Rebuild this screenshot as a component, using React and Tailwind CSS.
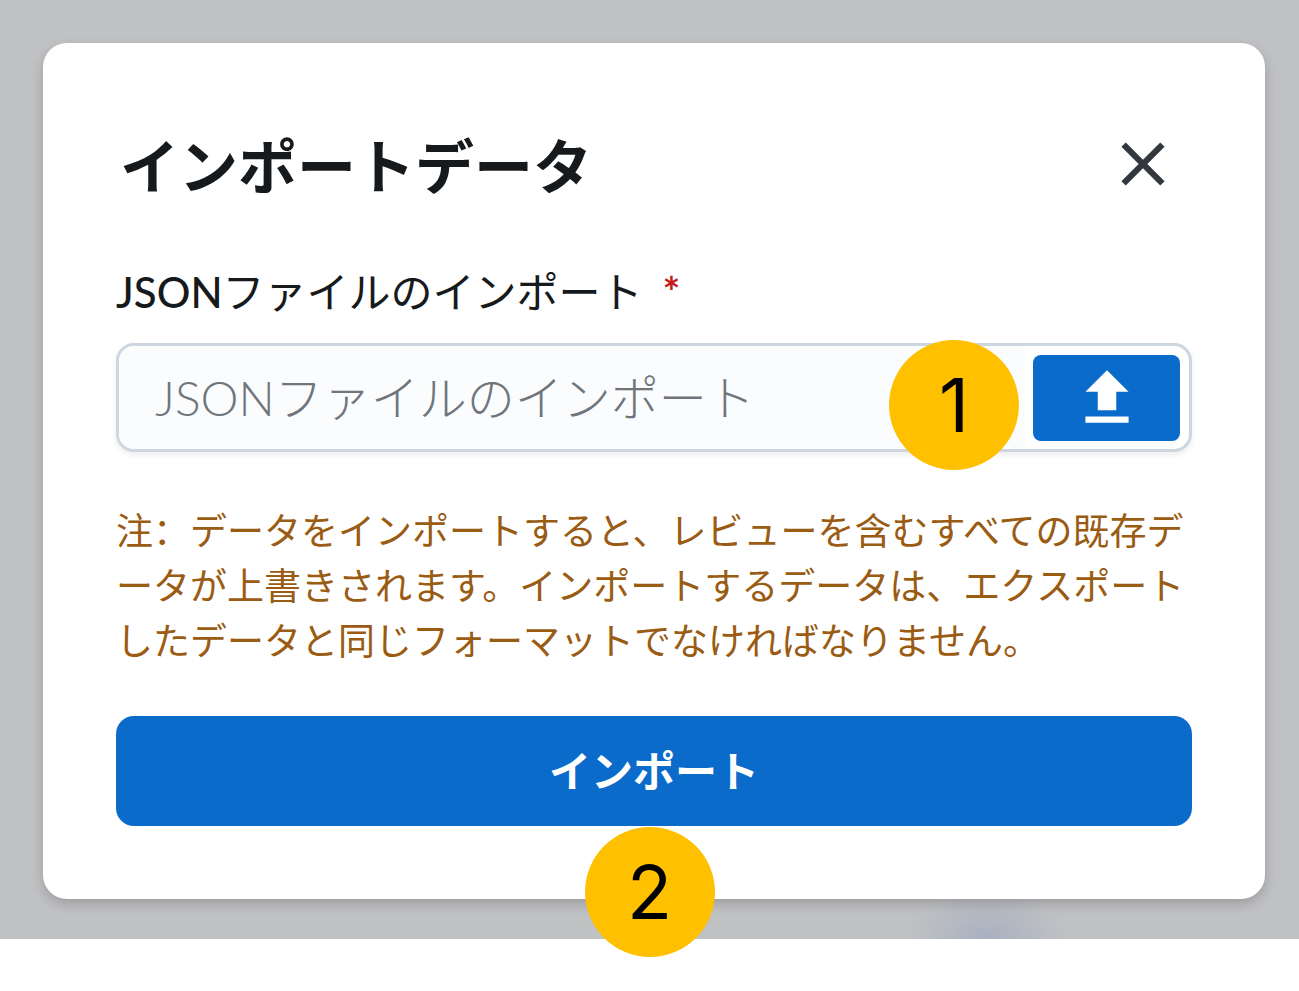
import { MdClose, MdFileUpload } from "react-icons/md";

const NOTE =
  "注\uff1aデータをインポートすると、レビューを含むすべての既存データが上書きされます。インポートするデータは、エクスポートしたデータと同じフォーマットでなければなりません。";

function StepBadge({ className, children }) {
  return (
    <span
      className={`absolute flex size-[130px] items-center justify-center rounded-full bg-[#ffc000] font-['Inter',sans-serif] text-[74px] leading-none text-black ${className}`}
    >
      {children}
    </span>
  );
}

export default function App() {
  return (
    <div className="min-h-screen bg-white font-['Lato','Noto_Sans_CJK_SC',sans-serif]" lang="ja">
      <main className="relative bg-[#c0c1c3] bg-[radial-gradient(ellipse_80px_50px_at_76%_100%,#a8b0c0,transparent)] pt-[43px] pr-[34px] pb-10 pl-[43px]">
        <section
          role="dialog"
          aria-labelledby="import-title"
          className="rounded-[24px] bg-white p-[73px] shadow-[0_5px_12px_rgba(21,21,21,0.2)]"
        >
          <header className="flex h-24 items-center justify-between">
            <h1 id="import-title" className="pt-1 pl-1 text-[59px] leading-none font-bold text-[#171a1c]">
              インポートデータ
            </h1>
            <button type="button" aria-label="閉じる" className="mr-3 text-[#32383e]">
              <MdClose className="size-[74px]" />
            </button>
          </header>

          <form onSubmit={(e) => e.preventDefault()}>
            <label htmlFor="json-file" className="mt-12 flex h-16 items-center text-[42px] leading-none text-[#171a1c]">
              <span>
                <span className="font-medium">JSON</span>ファイルのインポート
              </span>
              <span className="ml-5 font-bold text-[#c41c1c]">*</span>
            </label>

            <div className="relative mt-[19px] flex h-[109px] items-center rounded-[18px] border-3 border-[#cdd7e1] bg-white pr-[9px] shadow-[0_3px_6px_rgba(21,21,21,0.08)]">
              <input
                id="json-file"
                type="text"
                required
                placeholder="JSONファイルのインポート"
                className="h-full min-w-0 flex-1 rounded-l-[15px] bg-[#fbfcfe] pl-9 text-[48px] font-light text-[#32383e] outline-none placeholder:text-[#70757b]"
              />
              <button
                type="button"
                aria-label="ファイルを選択"
                className="ml-2 flex h-[86px] w-[147px] items-center justify-center rounded-lg bg-[#0b6bcb] text-white"
              >
                <MdFileUpload className="size-[74px]" />
              </button>
              <StepBadge className="-top-1.5 right-[170px]">1</StepBadge>
            </div>

            <p lang="zh-Hans" className="mt-[51px] text-[37px] leading-[55px] text-[#9a5b13] [line-break:loose]">
              {NOTE}
            </p>

            <button
              type="submit"
              className="mt-12 h-[110px] w-full rounded-[18px] bg-[#0b6bcb] text-[42px] leading-none font-bold text-white"
            >
              インポート
            </button>
          </form>
        </section>
        <StepBadge className="-bottom-[18px] left-1/2 -translate-x-1/2">2</StepBadge>
      </main>
    </div>
  );
}
